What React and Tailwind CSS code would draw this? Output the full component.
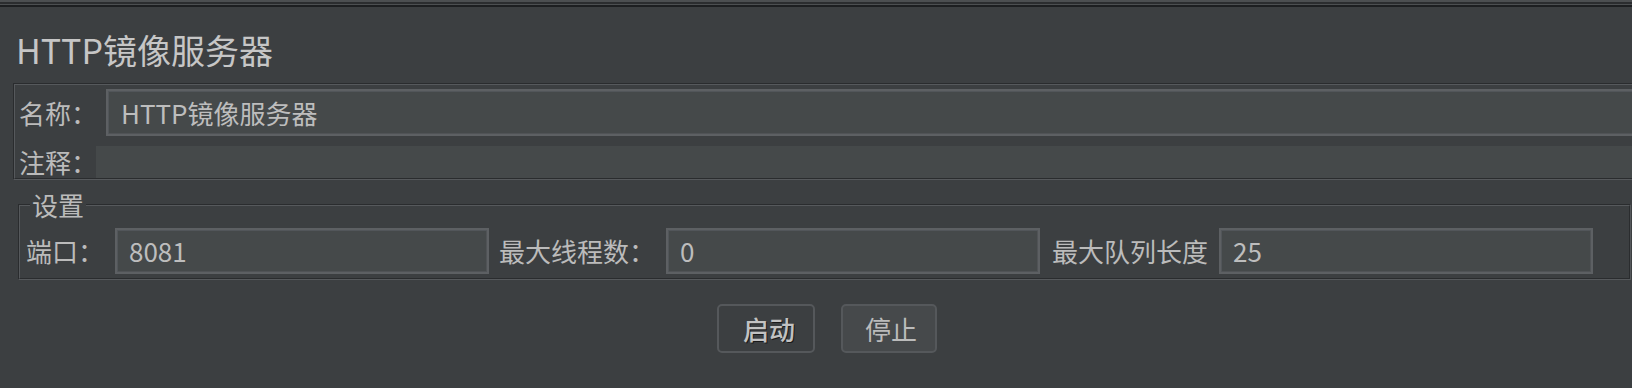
import React from 'react';

// 蚀刻边框：外层深色线 + 内层浅色线
const Etched = ({ className = '', innerClassName = '', children }) => (
  <div className={`border-t border-l border-r border-b border-t-[#2a2c2e] border-l-[#2a2c2e] border-r-[#56595c] border-b-[#56595c] ${className}`}>
    <div className={`border-t border-l border-r border-b border-t-[#56595c] border-l-[#56595c] border-r-[#2a2c2e] border-b-[#2a2c2e] ${innerClassName}`}>
      {children}
    </div>
  </div>
);

const Field = ({ value, className = '' }) => (
  <div className={`h-[46px] flex items-center border-2 border-[#5d6063] bg-[#45494a] shadow-[inset_1px_1px_0_#52565a,inset_-1px_-1px_0_#505356] pl-[12px] text-[26px] leading-[26px] text-[#bdbdbd] ${className}`}>
    {value}
  </div>
);

const App = () => {
  return (
    <div className="w-full h-[388px] overflow-hidden bg-[#3c3f41] font-['Noto_Sans_CJK_SC',sans-serif] text-[#bbbbbb]">
      {/* 顶部分隔条 */}
      <div className="h-[2px] bg-[#4c4f51]" />
      <div className="h-[2px] bg-[#2b2d2f]" />
      <div className="h-[1px] bg-[#4c4f51]" />
      <div className="h-[2px] bg-[#1d1f21]" />

      <div className="pt-[26px] pl-[16px] h-[60px]">
        <div className="text-[34px] leading-[34px] text-[#c6c6c6] whitespace-nowrap">HTTP镜像服务器</div>
      </div>

      {/* 名称 / 注释 */}
      <Etched className="mt-[16px] ml-[13px] mr-[-20px]" innerClassName="pt-[4px] pl-[4px]">
        <div className="flex items-center">
          <div className="w-[87px] shrink-0 text-[26px] leading-[26px] whitespace-nowrap">名称：</div>
          <Field value="HTTP镜像服务器" className="flex-1 h-[47px] pl-[13px]" />
        </div>
        <div className="flex items-center mt-[10px]">
          <div className="w-[77px] shrink-0 text-[26px] leading-[26px] whitespace-nowrap">注释：</div>
          <div className="flex-1 h-[32px] bg-[#45494a]" />
        </div>
      </Etched>

      {/* 设置 */}
      <div className="relative mt-[24px] ml-[18px] mr-[1px]">
        <Etched innerClassName="pt-[22px] pb-[4px] pl-[6px] pr-[36px]">
          <div className="flex items-center">
            <div className="w-[78px] shrink-0 text-[26px] leading-[26px] whitespace-nowrap">端口：</div>
            <Field value="8081" className="flex-1 ml-[11px]" />
            <div className="w-[156px] shrink-0 ml-[10px] text-[26px] leading-[26px] whitespace-nowrap">最大线程数：</div>
            <Field value="0" className="flex-1 ml-[11px]" />
            <div className="w-[156px] shrink-0 ml-[12px] text-[26px] leading-[26px] whitespace-nowrap">最大队列长度</div>
            <Field value="25" className="flex-1 ml-[11px]" />
          </div>
        </Etched>
        <span className="absolute top-[-12px] left-[12px] px-[2px] bg-[#3c3f41] text-[26px] leading-[26px]">设置</span>
      </div>

      {/* 按钮 */}
      <div className="flex justify-center gap-[26px] mt-[24px] pl-[22px]">
        <button className="w-[98px] h-[49px] pl-[24px] text-left rounded-[5px] border-2 border-[#55585b] bg-[#3c3f41] text-[26px] leading-[26px] font-medium text-[#c2c2c2] [text-shadow:1px_1px_0_#1a1a1a]">
          启动
        </button>
        <button className="w-[96px] h-[49px] pl-[22px] text-left rounded-[5px] border-2 border-[#55585b] bg-[#46494b] text-[26px] leading-[26px] text-[#bbbbbb]">
          停止
        </button>
      </div>
    </div>
  );
};

export default App;
